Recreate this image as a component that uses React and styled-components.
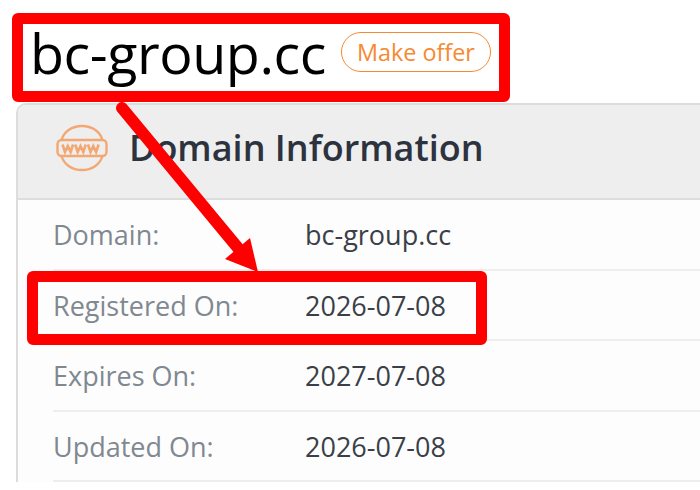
import styled, { createGlobalStyle } from "styled-components";

const GlobalStyle = createGlobalStyle`
  html, body {
    margin: 0;
    padding: 0;
    background: #fff;
    overflow: hidden;
  }
  body {
    font-family: "Open Sans", "Noto Sans", sans-serif;
  }
`;

const rows = [
  { label: "Domain:", value: "bc-group.cc" },
  { label: "Registered On:", value: "2026-07-08" },
  { label: "Expires On:", value: "2027-07-08" },
  { label: "Updated On:", value: "2026-07-08" },
];

const WwwIcon = () => (
  <svg width="54" height="48" viewBox="0 0 54 48" fill="none" stroke="#f3a873" strokeWidth="2.4">
    <path d="M6.500 16C9 7.500 17 2 27 2s18 5.500 20.500 14" />
    <path d="M6.500 32C9 40.500 17 46 27 46s18-5.500 20.500-14" />
    <rect x="2.500" y="16" width="49" height="16" rx="4" />
    <path d="M7.500 20.500l2.500 7.500 2.800-6 2.800 6 2.500-7.500M20.200 20.500l2.500 7.500 2.800-6 2.800 6 2.500-7.500M33 20.500l2.500 7.500 2.800-6 2.800 6 2.500-7.500" strokeWidth="2.600" />
  </svg>
);

const App = () => (
  <Page>
    <GlobalStyle />
    <TitleRow>
      <Title>bc-group.cc</Title>
      <OfferButton>Make offer</OfferButton>
    </TitleRow>

    <Card>
      <CardHeader>
        <WwwIcon />
        <CardTitle>Domain Information</CardTitle>
      </CardHeader>
      {rows.map((row) => (
        <Row key={row.label}>
          <Label>{row.label}</Label>
          <Value>{row.value}</Value>
        </Row>
      ))}
    </Card>

    <Callout $left={12} $top={13} $width={498} $height={89} />
    <Callout $left={27} $top={271} $width={460} $height={74} />
    <Arrow width="700" height="490" viewBox="0 0 700 490">
      <path d="M122 108L243 254" stroke="#ff0000" strokeWidth="12" strokeLinecap="round" fill="none" />
      <path d="M225 259L250 238L258 272Z" fill="#ff0000" />
    </Arrow>
  </Page>
);

export default App;

const Page = styled.div`
  position: relative;
  width: 700px;
  height: 490px;
  overflow: hidden;
`;

const TitleRow = styled.div`
  display: flex;
  align-items: center;
  height: 103px;
  padding-left: 30px;
  padding-top: 2px;
  box-sizing: border-box;
`;

const Title = styled.h1`
  margin: 0;
  font-size: 55.6px;
  font-weight: 400;
  line-height: 1;
  color: #000;
  letter-spacing: -0.45px;
`;

const OfferButton = styled.a`
  display: flex;
  align-items: center;
  justify-content: center;
  width: 150px;
  height: 40px;
  margin-left: 15px;
  margin-top: -2px;
  box-sizing: border-box;
  border: 1.5px solid #f58a33;
  border-radius: 20px;
  font-size: 23.4px;
  color: #f58a33;
`;

const Card = styled.div`
  width: 740px;
  margin-left: 16px;
  border: 2px solid #ddd;
  border-bottom: 0;
  border-radius: 10px 10px 0 0;
  background: #fdfdfd;
  box-sizing: border-box;
`;

const CardHeader = styled.div`
  display: flex;
  align-items: center;
  gap: 20px;
  height: 95px;
  padding-left: 37px;
  padding-bottom: 8px;
  background: #eee;
  border-bottom: 2px solid #ddd;
  border-radius: 8px 8px 0 0;
  box-sizing: border-box;
`;

const CardTitle = styled.h2`
  margin: 0;
  font-size: 36px;
  font-weight: 600;
  color: #2c333e;
`;

const Row = styled.div`
  display: flex;
  align-items: center;
  height: 70.5px;
  margin-left: 35px;
  padding-top: 1px;
  border-bottom: 2px solid #eee;
  box-sizing: border-box;
  font-size: 27px;
`;

const Label = styled.div`
  width: 252px;
  color: #808890;
`;

const Value = styled.div`
  color: #3a3f48;
`;

const Callout = styled.div`
  position: absolute;
  left: ${(p) => p.$left}px;
  top: ${(p) => p.$top}px;
  width: ${(p) => p.$width}px;
  height: ${(p) => p.$height}px;
  border: 11px solid #ff0000;
  border-radius: 6px;
  box-sizing: border-box;
`;

const Arrow = styled.svg`
  position: absolute;
  left: 0;
  top: 0;
`;
